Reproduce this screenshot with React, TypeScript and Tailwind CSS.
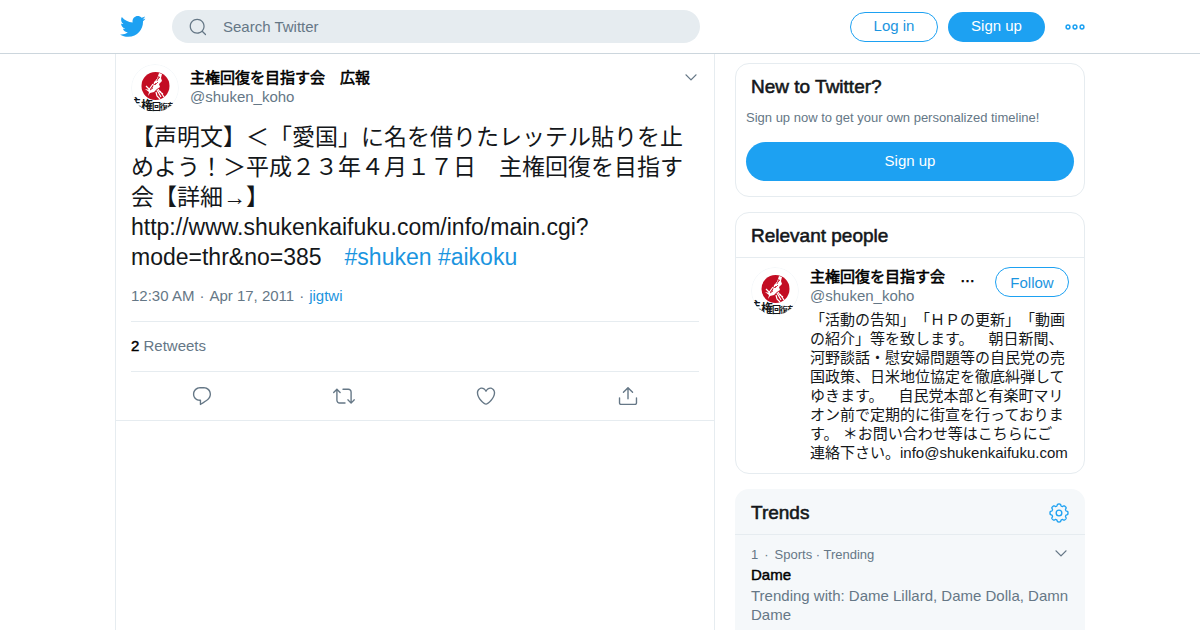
import React from "react";

const paths = {
  bird: "M23.643 4.937c-.835.37-1.732.62-2.675.733.962-.576 1.7-1.49 2.048-2.578-.9.534-1.897.922-2.958 1.13-.85-.904-2.06-1.47-3.4-1.47-2.572 0-4.658 2.086-4.658 4.66 0 .364.042.718.12 1.06-3.873-.195-7.304-2.05-9.602-4.868-.4.69-.63 1.49-.63 2.342 0 1.616.823 3.043 2.072 3.878-.764-.025-1.482-.234-2.11-.583v.06c0 2.257 1.605 4.14 3.737 4.568-.392.106-.803.162-1.227.162-.3 0-.593-.028-.877-.082.593 1.85 2.313 3.198 4.352 3.234-1.595 1.25-3.604 1.995-5.786 1.995-.376 0-.747-.022-1.112-.065 2.062 1.323 4.51 2.093 7.14 2.093 8.57 0 13.255-7.098 13.255-13.254 0-.2-.005-.402-.014-.602.91-.658 1.7-1.477 2.323-2.41z",
  search:
    "M21.53 20.47l-3.66-3.66C19.195 15.24 20 13.214 20 11c0-4.97-4.03-9-9-9s-9 4.03-9 9 4.03 9 9 9c2.215 0 4.24-.804 5.808-2.13l3.66 3.66c.147.146.34.22.53.22s.385-.073.53-.22c.295-.293.295-.767.002-1.06zM3.5 11c0-4.135 3.365-7.5 7.5-7.5s7.5 3.365 7.5 7.5-3.365 7.5-7.5 7.5-7.5-3.365-7.5-7.5z",
  caret:
    "M20.207 8.147c-.39-.39-1.023-.39-1.414 0L12 14.94 5.207 8.147c-.39-.39-1.023-.39-1.414 0-.39.39-.39 1.023 0 1.414l7.5 7.5c.195.196.45.294.707.294s.512-.098.707-.293l7.5-7.5c.39-.39.39-1.022 0-1.413z",
  reply:
    "M14.046 2.242l-4.148-.01h-.002c-4.374 0-7.8 3.427-7.8 7.802 0 4.098 3.186 7.206 7.465 7.37v3.828c0 .108.044.286.12.403.142.225.384.347.632.347.138 0 .277-.038.402-.118.264-.168 6.473-4.14 8.088-5.506 1.902-1.61 3.04-3.97 3.043-6.312v-.017c-.006-4.367-3.43-7.787-7.8-7.788zm3.787 12.972c-1.134.96-4.862 3.405-6.772 4.643V16.67c0-.414-.335-.75-.75-.75h-.396c-3.66 0-6.318-2.476-6.318-5.886 0-3.534 2.768-6.302 6.3-6.302l4.147.01h.002c3.532 0 6.3 2.766 6.302 6.296-.003 1.91-.942 3.844-2.514 5.176z",
  retweet:
    "M23.77 15.67c-.292-.293-.767-.293-1.06 0l-2.22 2.22V7.65c0-2.068-1.683-3.75-3.75-3.75h-5.85c-.414 0-.75.336-.75.75s.336.75.75.75h5.85c1.24 0 2.25 1.01 2.25 2.25v10.24l-2.22-2.22c-.293-.293-.768-.293-1.06 0s-.294.768 0 1.06l3.5 3.5c.145.147.337.22.53.22s.383-.072.53-.22l3.5-3.5c.294-.292.294-.767 0-1.06zm-10.66 3.28H7.26c-1.24 0-2.25-1.01-2.25-2.25V6.46l2.22 2.22c.148.147.34.22.532.22s.384-.073.53-.22c.293-.293.293-.768 0-1.06l-3.5-3.5c-.293-.294-.768-.294-1.06 0l-3.5 3.5c-.294.292-.294.767 0 1.06s.767.293 1.06 0l2.22-2.22V16.7c0 2.068 1.683 3.75 3.75 3.75h5.85c.414 0 .75-.336.75-.75s-.337-.75-.75-.75z",
  like: "M12 21.638h-.014C9.403 21.59 1.95 14.856 1.95 8.478c0-3.064 2.525-5.754 5.403-5.754 2.29 0 3.83 1.58 4.646 2.73.814-1.148 2.354-2.73 4.645-2.73 2.88 0 5.404 2.69 5.404 5.755 0 6.376-7.454 13.11-10.037 13.157H12zM7.354 4.225c-2.08 0-3.903 1.988-3.903 4.255 0 5.74 7.034 11.596 8.55 11.658 1.518-.062 8.55-5.917 8.55-11.658 0-2.267-1.823-4.255-3.903-4.255-2.528 0-3.94 2.936-3.952 2.965-.23.562-1.156.562-1.387 0-.014-.03-1.425-2.965-3.954-2.965z",
  share:
    "M17.53 7.47l-5-5c-.293-.293-.768-.293-1.06 0l-5 5c-.294.293-.294.768 0 1.06s.767.294 1.06 0l3.72-3.72V15c0 .414.336.75.75.75s.75-.336.75-.75V4.81l3.72 3.72c.146.147.338.22.53.22s.384-.072.53-.22c.293-.293.293-.767 0-1.06zM19.708 21.944H4.292C3.028 21.944 2 20.916 2 19.652V14c0-.414.336-.75.75-.75s.75.336.75.75v5.652c0 .437.355.792.792.792h15.416c.437 0 .792-.355.792-.792V14c0-.414.336-.75.75-.75s.75.336.75.75v5.652c0 1.264-1.028 2.292-2.292 2.292z",
};

type IconProps = { name: keyof typeof paths; className?: string };

const Icon: React.FC<IconProps> = ({ name, className }) => (
  <svg viewBox="0 0 24 24" fill="currentColor" aria-hidden="true" className={className}>
    <path d={paths[name]} />
  </svg>
);

// eight wide, rounded teeth around the centre
const gearPoints = Array.from({ length: 160 }, (_, i) => {
  const a = (i / 160) * Math.PI * 2;
  const r = 9.7 + 1.1 * Math.tanh(2.2 * Math.cos(8 * a) + 0.5);
  return `${(12 + r * Math.cos(a)).toFixed(2)},${(12 + r * Math.sin(a)).toFixed(2)}`;
}).join(" ");

const Gear: React.FC = () => (
  <svg viewBox="0 0 24 24" className="size-5" fill="none" stroke="currentColor" strokeWidth="1.6" aria-hidden="true">
    <polygon points={gearPoints} strokeLinejoin="round" />
    <circle cx="12" cy="12" r="3.4" />
  </svg>
);

const Avatar: React.FC = () => (
  <a href="#profile" aria-label="@shuken_koho" className="size-12 shrink-0 overflow-hidden rounded-full">
    <svg viewBox="0 0 48 48" className="size-12" aria-hidden="true">
      <circle cx="24" cy="24" r="23.5" fill="#fff" stroke="#f5f8fa" />
      <circle cx="24.5" cy="22" r="14" fill="#c30d23" />
      {/* statue */}
      <path
        d="M28 9l3 1-1 4 1 3-3 3 1 3-3 2-3 3-4 1-2 3 1-4-4-3 5 1 3-3 1-5 3-3z"
        fill="#fff"
      />
      <path
        d="M29 11l-3 5 2 2-3 5M22 20l-5 7M15 22l4 4M27 25l2 3 3 2M25 28l1 4 3 3M29 27l4 6M26 26l4 7"
        fill="none"
        stroke="#fff"
        strokeWidth="1.2"
      />
      <path d="M28 12l-2 5M27 18l-3 3M22 24l-3 2M29 13l-2 2M25 19l-2 2" stroke="#c30d23" strokeWidth=".8" />
      <text fill="#14171a" fontWeight="700" fontFamily="Noto Sans CJK JP, sans-serif">
        <tspan x="0" y="42" fontSize="10">主</tspan>
        <tspan x="10" y="46" fontSize="12">権</tspan>
        <tspan x="21" y="46" fontSize="9">回</tspan>
        <tspan x="29" y="46" fontSize="8">復</tspan>
        <tspan x="36" y="45" fontSize="8">を</tspan>
      </text>
    </svg>
  </a>
);

const CardTitle: React.FC<{ children: React.ReactNode }> = ({ children }) => (
  <h2 className="text-[19px] leading-6 [-webkit-text-stroke:0.03em]">{children}</h2>
);

const TopBar: React.FC = () => (
  <header className="border-b border-[#ccd6dd] bg-white">
    <div className="mx-auto flex h-[53px] max-w-[970px] items-center">
      <a href="#home" aria-label="Twitter" className="ml-1 text-[#1da1f2]">
        <Icon name="bird" className="size-[27px]" />
      </a>
      <label className="ml-[26px] flex h-[33px] max-w-[528px] grow items-center rounded-full bg-[#e6ecf0] pl-4 text-[#657786]">
        <Icon name="search" className="size-5" />
        <input
          type="text"
          aria-label="Search query"
          placeholder="Search Twitter"
          className="ml-[15px] min-w-0 grow bg-transparent pt-px outline-none placeholder:text-[#657786]"
        />
      </label>
      <div className="ml-auto flex items-center">
        <a
          href="#login"
          className="flex h-[30px] w-[88px] items-center justify-center rounded-full border border-[#1da1f2] text-[#1b95e0]"
        >
          Log in
        </a>
        <a
          href="#signup"
          className="ml-[10px] flex h-[30px] w-[97px] items-center justify-center rounded-full bg-[#1da1f2] text-white"
        >
          Sign up
        </a>
        <button aria-label="More" className="ml-5 text-[#1da1f2]">
          <svg viewBox="0 0 20 20" className="size-5" fill="none" stroke="currentColor" strokeWidth="1.5" aria-hidden="true">
            <circle cx="3" cy="10" r="1.9" />
            <circle cx="10" cy="10" r="1.9" />
            <circle cx="17" cy="10" r="1.9" />
          </svg>
        </button>
      </div>
    </div>
  </header>
);

const actions: { name: keyof typeof paths; label: string }[] = [
  { name: "reply", label: "Reply" },
  { name: "retweet", label: "Retweet" },
  { name: "like", label: "Like" },
  { name: "share", label: "Share" },
];

const Tweet: React.FC = () => (
  <article className="border-b border-[#e6ecf0] px-[15px] pt-[10px]">
    <div className="flex">
      <Avatar />
      <div className="ml-[11px] grow pt-1 leading-[19px]">
        <p className="text-black [-webkit-text-stroke:0.04em]">主権回復を目指す会　広報</p>
        <p className="text-[#657786]">@shuken_koho</p>
      </div>
      <button aria-label="More" className="h-[26px] text-[#657786]">
        <Icon name="caret" className="size-4" />
      </button>
    </div>
    <p className="mt-[10px] text-[23px] leading-[30px]">
      【声明文】＜「愛国」に名を借りたレッテル貼りを止めよう！＞平成２３年４月１７日　主権回復を目指す会【詳細→】
      <br />
      http://www.shukenkaifuku.com/info/main.cgi?mode=thr&amp;no=385{"\u3000"}
      <a href="#shuken" className="text-[#1b95e0]">#shuken</a>{" "}
      <a href="#aikoku" className="text-[#1b95e0]">#aikoku</a>
    </p>
    <p className="mt-[14px] mb-4 leading-[19px] text-[#657786]">
      12:30 AM<span className="px-[5px]">·</span>Apr 17, 2011<span className="px-[5px]">·</span>
      <a href="#source" className="text-[#1b95e0]">jigtwi</a>
    </p>
    <p className="border-y border-[#e6ecf0] pt-[14px] pb-4 leading-[19px] text-[#657786]">
      <span className="text-black [-webkit-text-stroke:0.03em]">2</span> Retweets
    </p>
    <div className="grid h-12 grid-cols-4 items-center justify-items-center text-[#657786]">
      {actions.map((action) => (
        <button key={action.name} aria-label={action.label}>
          <Icon name={action.name} className="size-[22px]" />
        </button>
      ))}
    </div>
  </article>
);

const SignUpCard: React.FC = () => (
  <section className="rounded-[14px] border border-[#e6ecf0] px-[10px] pt-[11px] pb-[15px]">
    <div className="px-[5px]">
      <CardTitle>New to Twitter?</CardTitle>
    </div>
    <p className="mt-[11px] text-[13px] leading-4 text-[#657786]">
      Sign up now to get your own personalized timeline!
    </p>
    <a
      href="#signup"
      className="mt-4 flex h-[39px] items-center justify-center rounded-full bg-[#1da1f2] text-white"
    >
      Sign up
    </a>
  </section>
);

const RelevantPeople: React.FC = () => (
  <section className="rounded-[14px] border border-[#e6ecf0]">
    <div className="border-b border-[#e6ecf0] px-[15px] pt-[11px] pb-[9px]">
      <CardTitle>Relevant people</CardTitle>
    </div>
    <div className="flex px-[15px] pt-[9px] pb-[11px]">
      <Avatar />
      <div className="ml-[11px] min-w-0 grow leading-[19px]">
        <div className="flex items-start">
          <div className="min-w-0 grow">
            <p className="truncate text-black [-webkit-text-stroke:0.04em]">主権回復を目指す会　広報</p>
            <p className="text-[#657786]">@shuken_koho</p>
          </div>
          <button className="ml-4 h-[30px] w-[74px] shrink-0 rounded-full border border-[#1da1f2] text-[#1b95e0]">
            Follow
          </button>
        </div>
        <p className="mt-[5px]">
          「活動の告知」「ＨＰの更新」「動画の紹介」等を致します。　朝日新聞、河野談話・慰安婦問題等の自民党の売国政策、日米地位協定を徹底糾弾してゆきます。　自民党本部と有楽町マリオン前で定期的に街宣を行っております。
          ＊お問い合わせ等はこちらにご
          <br />
          連絡下さい。info@shukenkaifuku.com
        </p>
      </div>
    </div>
  </section>
);

const Trends: React.FC = () => (
  <section className="rounded-t-[14px] bg-[#f5f8fa]">
    <div className="flex items-center justify-between border-b border-[#e6ecf0] px-4 pt-3 pb-[9px]">
      <CardTitle>Trends</CardTitle>
      <button aria-label="Trend settings" className="text-[#1da1f2]">
        <Gear />
      </button>
    </div>
    <div className="px-4 py-[10px]">
      <div className="flex items-start justify-between text-[#657786]">
        <p className="text-[13px] leading-5">
          1<span className="px-[6px]">·</span>Sports · Trending
        </p>
        <button aria-label="More">
          <Icon name="caret" className="size-4" />
        </button>
      </div>
      <p className="leading-5 text-black [-webkit-text-stroke:0.03em]">Dame</p>
      <p className="mt-px leading-[19px] text-[#657786]">
        Trending with: Dame Lillard, Dame Dolla, Damn Dame
      </p>
    </div>
  </section>
);

const App: React.FC = () => {
  return (
    <div
      lang="ja"
      className="flex h-screen flex-col overflow-hidden bg-white font-['Liberation_Sans','Noto_Sans_CJK_JP',sans-serif] text-[15px] text-[#14171a] [text-spacing-trim:space-all]"
    >
      <TopBar />
      <div className="mx-auto flex w-full max-w-[970px] grow">
        <main className="min-w-0 grow border-x border-[#e6ecf0]">
          <Tweet />
        </main>
        <aside className="ml-5 flex w-[350px] shrink-0 flex-col gap-[15px] pt-[9px]">
          <SignUpCard />
          <RelevantPeople />
          <Trends />
        </aside>
      </div>
    </div>
  );
};

export default App;
